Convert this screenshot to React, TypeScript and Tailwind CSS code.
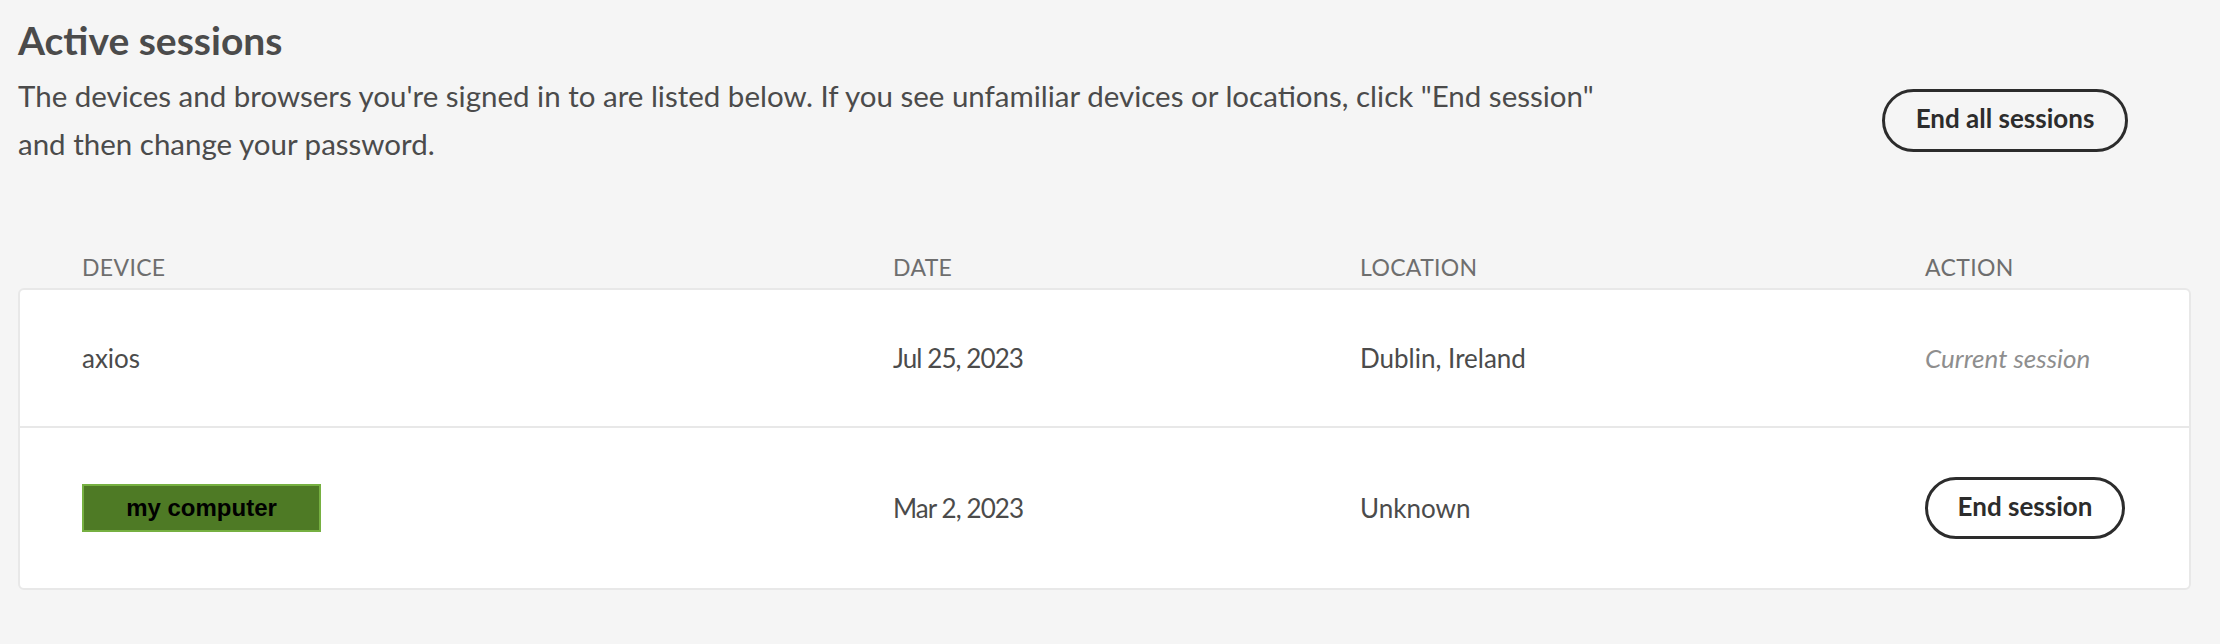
const sessions = [
  { device: 'axios', date: 'Jul 25, 2023', location: 'Dublin, Ireland', current: true },
  { device: 'my computer', date: 'Mar 2, 2023', location: 'Unknown', current: false },
];

const cols = 'grid grid-cols-[811px_467px_565px_1fr] items-center';

export default function App() {
  return (
    <div className="min-h-screen bg-[#f5f5f5] pl-[18px] pr-[29px] pt-[17px] font-['Lato',sans-serif] text-[#4b4b4b]">
      <h1 className="text-[39px] font-bold leading-[46px] text-[#4b4b4b]">Active sessions</h1>
      <div className="mt-[9px] flex items-center justify-between">
        <p className="text-[29.5px] leading-[48px]">
          The devices and browsers you're signed in to are listed below. If you see unfamiliar devices or locations, click "End session"
          <br />
          and then change your password.
        </p>
        <button className="mr-[63px] h-[63px] w-[246px] rounded-full border-[3px] border-[#2c2c2c] pb-[4px] text-[26px] font-bold text-[#2c2c2c]">
          End all sessions
        </button>
      </div>

      <div className={`${cols} mt-[85px] h-[28px] pl-[64px] text-[23px] uppercase leading-[28px] tracking-[0.015em] text-[#6e6e6e]`}>
        <span>Device</span>
        <span>Date</span>
        <span>Location</span>
        <span>Action</span>
      </div>

      <div className="mt-[7px] rounded-[6px] border-2 border-[#e8e8e8] bg-white">
        {sessions.map((s, i) => (
          <div
            key={s.device}
            className={`${cols} pl-[62px] text-[26px] ${i === 0 ? 'h-[138px] border-b-2 border-[#e8e8e8]' : 'h-[160px]'}`}
          >
            <div>
              {s.current ? (
                <span>{s.device}</span>
              ) : (
                <span className="inline-flex h-[48px] w-[239px] items-center justify-center border-2 border-[#76b041] bg-[#4e7a25] font-['Liberation_Sans',Arial,sans-serif] text-[24px] font-bold text-black">
                  {s.device}
                </span>
              )}
            </div>
            <span className="tracking-[-0.035em]">{s.date}</span>
            <span>{s.location}</span>
            <div>
              {s.current ? (
                <span className="italic text-[#8e8e8e]">Current session</span>
              ) : (
                <button className="h-[62px] w-[200px] rounded-full border-[3px] border-[#2c2c2c] pb-[3px] text-[26px] font-bold text-[#2c2c2c]">
                  End session
                </button>
              )}
            </div>
          </div>
        ))}
      </div>
    </div>
  );
}
